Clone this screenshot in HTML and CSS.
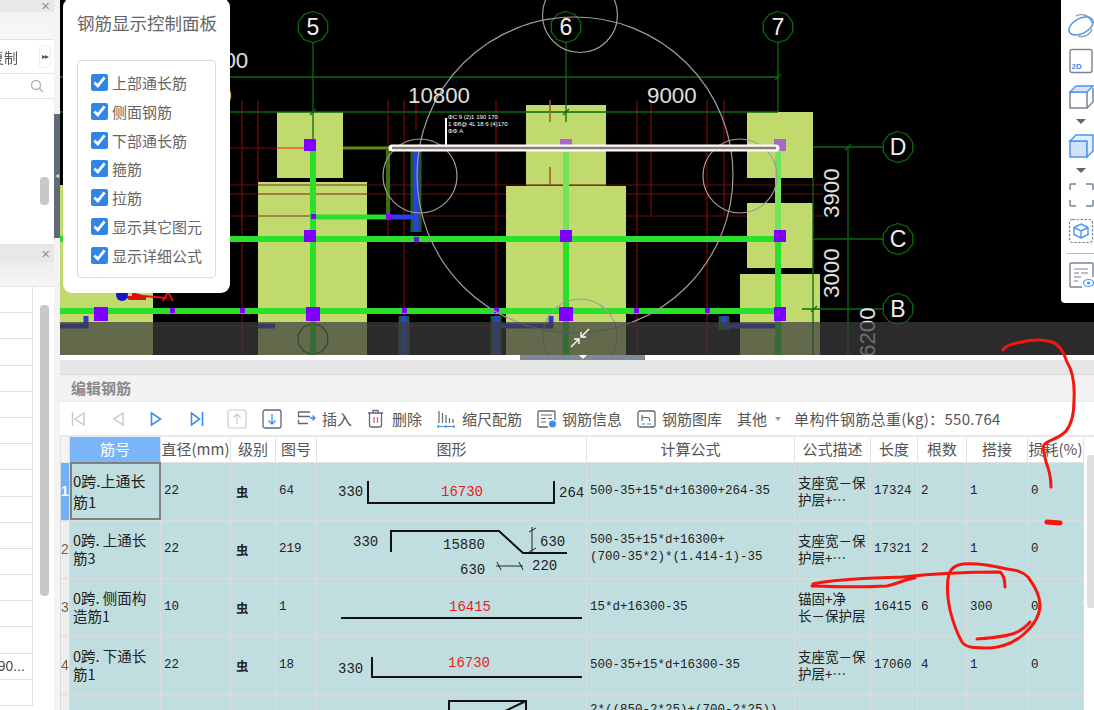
FILE: index.html
```html
<!DOCTYPE html>
<html lang="zh">
<head>
<meta charset="utf-8">
<title>编辑钢筋</title>
<link rel="stylesheet" href="styles.css">
</head>
<body>
<div class="app">
  <aside class="side">
    <section class="side-top">
      <div class="side-head"><span class="close">×</span></div>
      <div class="side-band"></div>
      <div class="side-actions"><span class="crop-text">复制</span><span class="more">▸▸</span></div>
      <div class="side-search">
        <svg class="ico-search" viewBox="0 0 14 14" width="14" height="14"><circle cx="6" cy="6" r="4.5"/><path d="M9.5 9.5L13 13"/></svg>
      </div>
      <div class="side-body"><span class="thumb thumb-a"></span></div>
    </section>
    <section class="side-low">
      <div class="side-head low"><span class="close">×</span></div>
      <div class="side-band low"></div>
      <div class="side-list">
        <span class="thumb thumb-b"></span>
        <div class="li"></div><div class="li"></div><div class="li"></div><div class="li"></div><div class="li"></div>
        <div class="li"></div><div class="li"></div><div class="li"></div><div class="li"></div><div class="li"></div>
        <div class="li"></div><div class="li"></div><div class="li"></div><div class="li"></div>
        <div class="li"><span>2790...</span></div>
        <div class="li"></div>
      </div>
    </section>
  </aside>
  <div class="sash"><div class="sash-gap"></div><div class="sash-grip">◂</div><div class="sash-rest"></div></div>
  <main class="main">
    <div class="view">
      <svg class="cad" viewBox="60 0 1034 355" width="1034" height="355">
        <defs>
          <polygon id="axis" points="0,-15.5 9,-12.5 14.7,-4.8 14.7,4.8 9,12.5 0,15.5 -9,12.5 -14.7,4.8 -14.7,-4.8 -9,-12.5"/>
        </defs>
        <rect x="60" y="0" width="1034" height="355" fill="#000"/>
        <g stroke="#7a0808" stroke-width="1.2" fill="none">
          <path d="M242 100V355M258 100V182M388 100V240M404 100V355M416 100V130M496 100V355M637 100V355M651 100V215M707 100V355M724 100V215"/>
          <path d="M230 148H390M230 185H823M230 194H823M230 216H823M60 326H823"/>
        </g>
        <g fill="#c1da6e">
          <rect x="60" y="185" width="93" height="170"/>
          <rect x="277" y="112" width="66" height="66"/>
          <rect x="258" y="182" width="109" height="173"/>
          <rect x="526" y="105" width="80" height="80"/>
          <rect x="506" y="186" width="120" height="169"/>
          <rect x="747" y="112" width="66" height="66"/>
          <rect x="747" y="203" width="66" height="65"/>
          <rect x="740" y="274" width="80" height="81"/>
        </g>
        <g stroke="#0c6a0c" stroke-width="1.3" fill="none">
          <path d="M60 77H778M60 112H778"/>
          <path d="M313 42V150M566 42V122M778 42V112"/>
          <path d="M813 147H883M813 239H883M802 309H883M848 147V355M813 178V355"/>
          <path d="M775 80L781 74M845 150L851 144M811 312L817 306M310 115L316 109M563 115L569 109"/>
          <use href="#axis" x="313" y="27"/><use href="#axis" x="566" y="27"/><use href="#axis" x="778" y="27"/>
          <use href="#axis" x="898" y="147"/><use href="#axis" x="898" y="239"/><use href="#axis" x="898" y="309"/>
          <use href="#axis" x="313" y="339"/>
        </g>
        <g fill="none">
          <path d="M258 194H367" stroke="#8c1a0a" stroke-width="1.2"/>
          <path d="M258 185H367M258 216H313" stroke="#a0673a" stroke-width="1.6"/>
          <path d="M550 100V122M550 167V185M566 167V185" stroke="#a0571e" stroke-width="1.5"/>
          <path d="M526 185H606" stroke="#8c4a1a" stroke-width="1.4"/>
          <path d="M343 148H390" stroke="#5f8a1a" stroke-width="3"/>
          <path d="M277 148H304" stroke="#e87a30" stroke-width="2"/>
        </g>
        <g stroke="#2a7a3a" fill="none" stroke-width="11" opacity=".75">
          <path d="M416 150V232M404 316V355M496 316V355M724 316V330"/>
        </g>
        <path d="M388 148V214" stroke="#3d6e10" stroke-width="4" fill="none"/>
        <g stroke="#2b3fe8" fill="none" stroke-width="5">
          <path d="M416 150V232M390 217H416M404 316V355M496 316V355M724 316V326"/>
          <path d="M60 326H86V316M500 326H551V316M258 326H275M724 326H778" stroke="#3535c8"/>
        </g>
        <g stroke="#2be02b" fill="none">
          <path d="M60 239H778M60 311H778" stroke-width="6"/>
          <path d="M313 150V355M566 236V355M778 236V355" stroke-width="6"/>
          <path d="M313 217H390" stroke-width="5"/>
          <path d="M566 152V236M778 152V236" stroke="#72e35a" stroke-width="6"/>
        </g>
        <g fill="#8000ff">
          <rect x="304" y="139" width="12" height="12"/>
          <rect x="304" y="230" width="12" height="12"/>
          <rect x="306" y="307" width="14" height="14"/>
          <rect x="94" y="307" width="14" height="14"/>
          <rect x="560" y="230" width="12" height="12"/>
          <rect x="559" y="307" width="14" height="14"/>
          <rect x="774" y="230" width="12" height="12"/>
          <rect x="774" y="307" width="12" height="14"/>
          <rect x="170" y="308" width="5" height="5"/><rect x="240" y="308" width="5" height="5"/>
          <rect x="402" y="308" width="5" height="5"/><rect x="494" y="308" width="5" height="5"/>
          <rect x="634" y="308" width="5" height="5"/><rect x="705" y="308" width="5" height="5"/>
          <rect x="311" y="214" width="5" height="5"/><rect x="386" y="214" width="5" height="5"/>
          <rect x="414" y="237" width="5" height="5"/><rect x="414" y="146" width="5" height="4"/>
        </g>
        <g fill="#a868c8">
          <rect x="560" y="139" width="12" height="11"/>
          <rect x="774" y="139" width="12" height="12"/>
        </g>
        <g stroke="#9c9c9c" stroke-width="1.2" fill="none">
          <circle cx="575" cy="175" r="158"/>
          <circle cx="580" cy="15" r="37.5"/>
          <circle cx="420" cy="176" r="37"/>
          <circle cx="740" cy="176" r="37"/>
          <circle cx="580" cy="336" r="37"/>
        </g>
        <path d="M392 148H776" stroke="#fff" stroke-width="7" stroke-linecap="round"/>
        <path d="M392 148H776" stroke="#8c7b72" stroke-width="2.5"/>
        <path d="M446 118V147" stroke="#fff" stroke-width="2"/>
        <g class="tiny"><text x="448" y="119">ΦC 9 (2)1 190 170</text><text x="448" y="126">1 Φ8@ 4L 18 6 (4)170</text><text x="448" y="133">ΦΦ A</text></g>
        <g class="dim">
          <text x="408" y="103">10800</text><text x="647" y="103">9000</text><text x="211" y="68">900</text><text x="182" y="103">6000</text>
          <text transform="translate(839 218) rotate(-90)">3900</text>
          <text transform="translate(839 298) rotate(-90)">3000</text>
          <text transform="translate(875 357) rotate(-90)">6200</text>
        </g>
        <g class="axis-label">
          <text x="313" y="35">5</text><text x="566" y="35">6</text><text x="778" y="35">7</text>
          <text x="898" y="155">D</text><text x="898" y="247">C</text><text x="898" y="317">B</text>
        </g>
        <path d="M125 296h7v-4l14 4v4H129z" fill="#e01010"/>
        <circle cx="122" cy="295" r="6" fill="#1414c8"/>
        <path d="M143 296L167 298M163 301L168 292L173 301" stroke="#e01010" stroke-width="2" fill="none"/>
        <rect x="60" y="322" width="1034" height="33" fill="#3c3c3c" fill-opacity=".71"/>
        <g stroke="#fff" stroke-width="1.4" fill="none">
          <path d="M589 329L581 337M581 332V337H586"/>
          <path d="M571 347L579 339M579 344V339H574"/>
        </g>
      </svg>

      <div class="panel">
        <h2 class="panel-title">钢筋显示控制面板</h2>
        <div class="panel-box">
          <label class="chk"><input type="checkbox" checked><span>上部通长筋</span></label>
          <label class="chk"><input type="checkbox" checked><span>侧面钢筋</span></label>
          <label class="chk"><input type="checkbox" checked><span>下部通长筋</span></label>
          <label class="chk"><input type="checkbox" checked><span>箍筋</span></label>
          <label class="chk"><input type="checkbox" checked><span>拉筋</span></label>
          <label class="chk"><input type="checkbox" checked><span>显示其它图元</span></label>
          <label class="chk"><input type="checkbox" checked><span>显示详细公式</span></label>
        </div>
      </div>

      <div class="vtools">
        <svg viewBox="0 0 26 26" width="26" height="26"><path d="M8 4A11 11 0 0 1 24 11M24 17A11 11 0 0 1 10 24" fill="none" stroke="#9aa3b0" stroke-width="1.5"/><ellipse cx="13" cy="14" rx="13" ry="7.500" transform="rotate(-28 13 14)" fill="none" stroke="#4c96ec" stroke-width="1.500"/></svg>
        <svg viewBox="0 0 26 26" width="26" height="26"><rect x="2" y="1.500" width="22" height="23" rx="2" fill="none" stroke="#7a8494" stroke-width="1.400"/><text x="3.500" y="21" class="t2d">2D</text></svg>
        <svg viewBox="0 0 26 26" width="26" height="26"><path d="M2 8H19V24H2Z" fill="none" stroke="#7a8494" stroke-width="1.500"/><path d="M25 4V18L19 24" fill="none" stroke="#7a8494" stroke-width="1.500"/><path d="M2 8L8 2H25L19 8Z" fill="#d6e6fa" stroke="#4c96ec" stroke-width="1.300"/></svg>
        <span class="caret"></span>
        <svg viewBox="0 0 26 26" width="26" height="26"><path d="M2 8H19V24H2Z" fill="#cfe2fa" stroke="#4c96ec" stroke-width="1.500"/><path d="M2 8L8 2H25V18L19 24V8Z" fill="#e2eefc" stroke="#4c96ec" stroke-width="1.500"/></svg>
        <span class="caret"></span>
        <svg viewBox="0 0 26 26" width="26" height="26"><path d="M2 8V3a1 1 0 0 1 1-1H8M18 2H24a1 1 0 0 1 1 1V8M25 18V23a1 1 0 0 1-1 1H18M8 24H3a1 1 0 0 1-1-1V18" fill="none" stroke="#7a8494" stroke-width="1.500"/></svg>
        <svg viewBox="0 0 26 26" width="26" height="26"><rect x="1.500" y="1.500" width="23" height="23" rx="3" fill="none" stroke="#7a8494" stroke-width="1.200" stroke-dasharray="2.500 1.500"/><path d="M13 6L20 9.500V16.500L13 20L6 16.500V9.500ZM6 9.500L13 13L20 9.500M13 13V20" fill="none" stroke="#4c96ec" stroke-width="1.400"/></svg>
        <span class="vsep"></span>
        <svg viewBox="0 0 26 26" width="26" height="26"><path d="M14 25H3a1 1 0 0 1-1-1V2a1 1 0 0 1 1-1H24a1 1 0 0 1 1 1V15" fill="none" stroke="#7a8494" stroke-width="1.400"/><path d="M6 7H20M6 11H11M13 11H20M6 15H13M6 19H10" stroke="#7a8494" stroke-width="1.200"/><ellipse cx="20.500" cy="21" rx="5" ry="3.500" fill="#fff" stroke="#4c96ec" stroke-width="1.200"/><circle cx="20.500" cy="21" r="1.600" fill="#4c96ec"/></svg>
      </div>
    </div>

    <div class="handlebar"><div class="handle"><span class="handle-tri"></span></div></div>

    <section class="editor">
      <div class="ed-strip"></div>
      <div class="ed-title">编辑钢筋</div>
      <div class="toolbar">
        <svg class="tb" viewBox="0 0 14 16" width="14" height="16"><path d="M1.500 1V15M13 2V14L4 8Z" fill="none" stroke="#c4c8ce" stroke-width="1.400"/></svg>
        <svg class="tb nav2" viewBox="0 0 12 16" width="12" height="16"><path d="M11 2V14L2 8Z" fill="none" stroke="#c4c8ce" stroke-width="1.400"/></svg>
        <svg class="tb nav3" viewBox="0 0 12 16" width="12" height="16"><path d="M1.500 2V14L10.500 8Z" fill="none" stroke="#3d8bef" stroke-width="1.600"/></svg>
        <svg class="tb nav4" viewBox="0 0 14 16" width="14" height="16"><path d="M12.500 1V15M1.500 2V14L9.500 8Z" fill="none" stroke="#3d8bef" stroke-width="1.600"/></svg>
        <svg class="tb nav5" viewBox="0 0 20 20" width="20" height="20"><rect x="1" y="1" width="18" height="18" rx="2" fill="none" stroke="#c8ccd2" stroke-width="1.200"/><path d="M10 15V5M6.500 8.500L10 5L13.500 8.500" fill="none" stroke="#c8ccd2" stroke-width="1.200"/></svg>
        <svg class="tb nav6" viewBox="0 0 20 20" width="20" height="20"><rect x="1" y="1" width="18" height="18" rx="2" fill="none" stroke="#5f6875" stroke-width="1.300"/><path d="M10 5V15M6.500 11.500L10 15L13.500 11.500" fill="none" stroke="#3d8bef" stroke-width="1.300"/></svg>
        <svg class="tb nav7" viewBox="0 0 19 16" width="19" height="16"><path d="M13 1H1.500V5.500H13M1.500 8.500V12.500H11" fill="none" stroke="#5f6875" stroke-width="1.300"/><path d="M13 7H18M15.500 4.500L18 7L15.500 9.500" fill="none" stroke="#3d8bef" stroke-width="1.300"/></svg>
        <span class="tb-label m6">插入</span>
        <svg class="tb nav8" viewBox="0 0 17 19" width="17" height="19"><path d="M1 4H16M6 4V1.500H11V4M2.500 4V16a2 2 0 0 0 2 2H12.500a2 2 0 0 0 2-2V4" fill="none" stroke="#5f6875" stroke-width="1.300"/><path d="M7 8V14M10.500 8V14" stroke="#e06050" stroke-width="1.300"/></svg>
        <span class="tb-label m8">删除</span>
        <svg class="tb nav8" viewBox="0 0 18 18" width="18" height="18"><path d="M2 1V13M5.500 3V13M9 5V13M12.500 8V13M16 9V13" stroke="#5f6875" stroke-width="1.200"/><path d="M1 16.500H17M1 15V18M17 15V18M9 15V18" stroke="#3d8bef" stroke-width="1.200"/></svg>
        <span class="tb-label m7">缩尺配筋</span>
        <svg class="tb nav8" viewBox="0 0 20 18" width="20" height="18"><path d="M11 17H2a1 1 0 0 1-1-1V2a1 1 0 0 1 1-1H17a1 1 0 0 1 1 1V10" fill="none" stroke="#5f6875" stroke-width="1.300"/><path d="M4 5H15M4 8.500H9M11 8.500H15M4 12H9" stroke="#5f6875" stroke-width="1.100"/><circle cx="15.500" cy="14" r="3.500" fill="#3d8bef"/></svg>
        <span class="tb-label m5">钢筋信息</span>
        <svg class="tb nav8" viewBox="0 0 19 18" width="19" height="18"><rect x="1" y="1" width="17" height="16" rx="2" fill="none" stroke="#5f6875" stroke-width="1.300"/><path d="M5 5V11M5 7.500H11a1.500 1.500 0 0 1 1.500 1.500V11" fill="none" stroke="#5f6875" stroke-width="1.200"/><path d="M5 14H8M10 14H14" stroke="#3d8bef" stroke-width="1.200"/></svg>
        <span class="tb-label m6">钢筋图库</span>
        <span class="tb-label other">其他</span><span class="tb-caret"></span>
        <span class="tb-total">单构件钢筋总重(kg)：550.764</span>
      </div>
      <div class="grid-wrap">
        <table class="grid">
          <colgroup><col class="c0"><col class="c1"><col class="c2"><col class="c3"><col class="c4"><col class="c5"><col class="c6"><col class="c7"><col class="c8"><col class="c9"><col class="c10"><col class="c11"></colgroup>
          <thead>
            <tr>
              <th class="corner"></th><th class="active-head">筋号</th><th>直径(mm)</th><th>级别</th><th>图号</th><th>图形</th><th>计算公式</th><th>公式描述</th><th>长度</th><th>根数</th><th>搭接</th><th>损耗(%)</th>
            </tr>
          </thead>
          <tbody>
            <tr>
              <td class="rh rh-on">1</td><td class="name cur">0跨.上通长筋1</td><td>22</td><td class="grade">虫</td><td>64</td>
              <td class="shape"><svg viewBox="0 0 270 57" width="270" height="57">
                <text x="21" y="33" class="s">330</text><path d="M51 18V40H237V18" class="bar"/><text x="145" y="33" class="r">16730</text><text x="242" y="34" class="s">264</text></svg></td>
              <td class="f">500-35+15*d+16300+264-35</td><td class="d">支座宽－保<br>护层+…</td><td>17324</td><td>2</td><td>1</td><td>0</td>
            </tr>
            <tr class="tall">
              <td class="rh">2</td><td class="name alt">0跨. 上通长筋3</td><td>22</td><td class="grade">虫</td><td>219</td>
              <td class="shape"><svg viewBox="0 0 270 57" width="270" height="57">
                <text x="36" y="25" class="s">330</text><path d="M74 31V10H182L206 32H250" class="bar"/><text x="126" y="28" class="s">15880</text>
                <text x="223" y="25" class="s">630</text><text x="143" y="53" class="s">630</text><text x="215" y="49" class="s">220</text>
                <path d="M215 6V32M212 11L219 7M212 31L219 27M179 45H206M180 41L184 49M202 41L206 49" class="thin"/></svg></td>
              <td class="f">500-35+15*d+16300+<br>(700-35*2)*(1.414-1)-35</td><td class="d">支座宽－保<br>护层+…</td><td>17321</td><td>2</td><td>1</td><td>0</td>
            </tr>
            <tr class="tall">
              <td class="rh">3</td><td class="name alt">0跨. 侧面构造筋1</td><td>10</td><td class="grade">虫</td><td>1</td>
              <td class="shape"><svg viewBox="0 0 270 57" width="270" height="57">
                <text x="153" y="32" class="r">16415</text><path d="M24 39H265" class="bar"/></svg></td>
              <td class="f">15*d+16300-35</td><td class="d">锚固+净<br>长－保护层</td><td>16415</td><td>6</td><td>300</td><td>0</td>
            </tr>
            <tr>
              <td class="rh">4</td><td class="name alt">0跨. 下通长筋1</td><td>22</td><td class="grade">虫</td><td>18</td>
              <td class="shape"><svg viewBox="0 0 270 57" width="270" height="57">
                <text x="21" y="36" class="s">330</text><path d="M55 20V40H265" class="bar"/><text x="152" y="30" class="r">16730</text></svg></td>
              <td class="f">500-35+15*d+16300-35</td><td class="d">支座宽－保<br>护层+…</td><td>17060</td><td>4</td><td>1</td><td>0</td>
            </tr>
            <tr>
              <td class="rh">5</td><td class="name"></td><td></td><td></td><td></td>
              <td class="shape"><svg viewBox="0 0 270 57" width="270" height="57">
                <path d="M132 18V6H209V18M184 18L209 6" class="bar"/></svg></td>
              <td class="f top">2*((850-2*25)+(700-2*25))</td><td></td><td></td><td></td><td></td><td></td>
            </tr>
          </tbody>
        </table>
        <span class="grid-scroll"></span>
      </div>
    </section>
  </main>
</div>
<svg class="ink" viewBox="0 0 1094 710" width="1094" height="710">
  <path d="M1003 350C1005 345 1015 343 1022 342C1032 339 1048 339 1056 344C1062 349 1064 354 1067 362C1072 370 1075 382 1074 400C1074 415 1071 425 1066 431C1060 438 1052 439 1046 443C1041 446 1044 452 1046 462C1050 472 1051 480 1051 487" />
  <path d="M1047 522L1060 523" class="blob"/>
  <path d="M813 584C840 578 880 578 903 577C930 574 960 572 1000 572C1004 575 1005 580 1005 587M812 586C840 587 870 587 887 586C900 583 905 579 915 578"/>
  <path d="M1007 569C990 565 975 563 963 564C955 565 951 568 949 574C946 585 948 600 950 610C953 622 958 635 962 642C966 648 975 648 990 648C1005 647 1015 642 1024 634C1034 625 1040 615 1040 605C1040 595 1034 585 1028 577C1022 571 1015 570 1007 569"/>
  <path d="M977 639C990 638 1005 637 1015 633C1022 630 1026 627 1030 622"/>
</svg>
</body>
</html>
```

FILE: styles.css
```css
*, *::before, *::after { box-sizing: border-box; }
html, body {
  margin: 0;
  padding: 0;
  width: 1094px;
  height: 710px;
  overflow: hidden;
  background: #fff;
  font-family: "Noto Sans CJK SC", "Noto Sans", sans-serif;
}
.app {
  display: grid;
  grid-template-columns: 54px 6px 1034px;
  width: 1094px;
  height: 710px;
  overflow: hidden;
  filter: blur(.35px);
}

/* left column */
.side { display: flex; flex-direction: column; height: 710px; overflow: hidden; }
.side-top { height: 238px; display: flex; flex-direction: column; overflow: hidden; }
.side-low { flex: 1; display: flex; flex-direction: column; margin-top: 6px; overflow: hidden; border-top: 1px solid #e2e2e2; }
.side-head { height: 12px; background: #e8e8e8; display: flex; justify-content: flex-end; align-items: flex-end; padding-right: 4px; flex: none; }
.side-head.low { height: 17px; align-items: center; }
.close { color: #8e8e8e; font: 15px/12px "Liberation Sans", sans-serif; }
.side-band { height: 28px; background: linear-gradient(#f2f2f2, #f8f8f8); border-bottom: 1px solid #e4e4e4; flex: none; }
.side-band.low { height: 25px; background: linear-gradient(#ececec, #f6f6f6); }
.side-actions { height: 34px; display: flex; justify-content: flex-end; align-items: center; gap: 21px; padding-right: 3px; border-bottom: 1px solid #e4e4e4; flex: none; }
.crop-text { color: #555; font-size: 14px; white-space: nowrap; flex: none; }
.more { width: 12px; height: 23px; border: 1px solid #eee; border-radius: 3px; font: 8px/21px "DejaVu Sans", sans-serif; letter-spacing: -1px; color: #555; flex: none; text-align: center; }
.side-search { height: 25px; border-bottom: 1px solid #e4e4e4; display: flex; justify-content: flex-end; align-items: center; padding-right: 10px; flex: none; }
.ico-search { fill: none; stroke: #b4b4b4; stroke-width: 1.4; }
.side-body { flex: 1; position: relative; }
.thumb { position: absolute; left: 40px; width: 9px; border-radius: 4px; background: #c8c8c8; }
.thumb-a { top: 78px; height: 28px; }
.thumb-b { top: 18px; height: 291px; }
.side-list { flex: 1; position: relative; }
.li { width: 33px; height: 26.200px; border-bottom: 1px solid #e0e0e0; border-right: 1px solid #e0e0e0; display: flex; justify-content: flex-end; align-items: center; padding-right: 7px; font-size: 14px; color: #444; }
.li span { flex: none; font-family: "Liberation Sans", sans-serif; }

.sash { display: flex; flex-direction: column; height: 710px; background: #f3f3f3; }
.sash-gap { height: 114px; }
.sash-grip { height: 124px; background: #606a78; color: #d8dce2; font: 8px/124px "DejaVu Sans", sans-serif; text-align: center; }
.sash-rest { flex: 1; }

/* main */
.main { display: flex; flex-direction: column; height: 710px; overflow: hidden; }
.view { position: relative; height: 355px; flex: none; overflow: hidden; }
.cad { display: block; }
.tiny text { fill: #fff; font: 6px "Liberation Sans", sans-serif; }
.dim text { fill: #e0e0e0; font: 22.3px "Liberation Sans", sans-serif; }
.axis-label text { fill: #eee; font: 23px "Liberation Sans", sans-serif; text-anchor: middle; }

.panel {
  position: absolute;
  left: 3px;
  top: -2px;
  width: 167px;
  height: 295px;
  padding: 14px 14px 15px;
  background: #fff;
  border-radius: 9px;
  display: flex;
  flex-direction: column;
}
.panel-title { margin: 0; height: 48px; font-size: 17.500px; font-weight: 400; line-height: 22px; color: #666; white-space: nowrap; }
.panel-box { flex: 1; border: 1px solid #dcdcdc; border-radius: 4px; padding: 13px 13px 0; display: flex; flex-direction: column; gap: 11.800px; }
.chk { display: flex; align-items: center; gap: 4px; height: 17px; font-size: 15px; color: #666; white-space: nowrap; }
.chk input { width: 17px; height: 17px; margin: 0; accent-color: #2f86e6; flex: none; }

.vtools {
  position: absolute;
  right: 0;
  top: 0;
  width: 33px;
  height: 303px;
  padding: 12px 0 0 7px;
  background: #fff;
  border-bottom-left-radius: 4px;
  display: flex;
  flex-direction: column;
  gap: 10px;
  overflow: hidden;
}
.vtools svg { display: block; flex: none; }
.t2d { fill: #3d8bef; font: bold 8px "Liberation Sans", sans-serif; }
.caret { width: 10px; height: 5px; margin: -1px 0 -1px 8px; border: 5px solid transparent; border-top: 5px solid #666; border-bottom: 0; flex: none; }
.vsep { height: 1px; margin: -1px 0 -2px -1px; background: #bbb; flex: none; }

.handlebar { height: 5px; flex: none; background: #fff; display: flex; padding-left: 460px; }
.handle { width: 125px; height: 5px; background: #7d8998; display: flex; justify-content: center; }
.handle-tri { width: 8px; height: 4px; border: 4px solid transparent; border-top: 4px solid #fff; border-bottom: 0; }

.editor { flex: 1; display: flex; flex-direction: column; overflow: hidden; }
.ed-strip { height: 15px; background: #e6e6e6; border-bottom: 1px solid #d8d8d8; flex: none; }
.ed-title { height: 27px; line-height: 26px; padding-left: 11px; font-size: 15px; font-weight: 700; color: #8a8a8a; background: #f2f2f2; border-bottom: 1px solid #e8e8e8; flex: none; }
.toolbar { height: 35px; flex: none; display: flex; align-items: center; background: #fff; font-size: 15px; color: #555; border-bottom: 2px solid #e8e8e8; padding-left: 11px; white-space: nowrap; }
.tb { flex: none; display: block; }
.nav2 { margin-left: 27px; }
.nav3 { margin-left: 26px; }
.nav4 { margin-left: 28px; }
.nav5 { margin-left: 23px; }
.nav6 { margin-left: 15px; }
.nav7 { margin-left: 15px; }
.nav8 { margin-left: 15px; }
.tb-label { flex: none; }
.m5 { margin-left: 5px; }
.m6 { margin-left: 6px; }
.m7 { margin-left: 7px; }
.m8 { margin-left: 8px; }
.other { margin-left: 15px; }
.tb-caret { width: 6px; height: 4px; margin-left: 8px; border: 3px solid transparent; border-top: 4px solid #999; border-bottom: 0; flex: none; }
.tb-total { margin-left: 13px; flex: none; letter-spacing: .3px; }

.grid-wrap { flex: 1; position: relative; overflow: hidden; }
.grid { width: 1023px; table-layout: fixed; border-collapse: collapse; background: #c0dee0; }
.c0 { width: 9px; } .c1 { width: 91px; } .c2 { width: 70px; } .c3 { width: 45px; } .c4 { width: 41px; }
.c5 { width: 270px; } .c6 { width: 208px; } .c7 { width: 76px; } .c8 { width: 47px; } .c9 { width: 49px; } .c10 { width: 61px; } .c11 { width: 56px; }
.grid th { height: 25px; padding: 0; background: #fff; font-size: 15px; line-height: 22px; font-weight: 400; color: #555; border: 1px solid #e2e2e2; border-top: 0; white-space: nowrap; overflow: hidden; }
.grid th.active-head { background: #7ab5f9; color: #fff; }
.grid th.corner { background: #f4f4f4; }
.grid td { height: 57px; padding: 0 3px; border: 1px solid #dcdcdc; font: 12.500px/17px "Liberation Mono", "Noto Sans CJK SC", monospace; color: #222; overflow: hidden; }
.grid tr.tall td { height: 58px; }
.grid td.rh { padding: 0; text-align: center; background: #eeeeee; color: #77604a; font: 14px "Liberation Sans", sans-serif; }
.grid td.rh-on { background: #6fb2f8; color: #fff; font-weight: 700; }
.grid td.name { font: 15px/21px "Noto Sans CJK SC", sans-serif; padding-right: 10px; color: #222; }
.grid td.alt { font-size: 14.500px; line-height: 18px; }
.grid td.cur { outline: 2px solid #808080; outline-offset: -2px; }
.grid td.grade { font: 700 12.500px "Noto Sans CJK SC", sans-serif; padding-left: 5px; }
.grid td.shape { padding: 0; line-height: 0; }
.grid td.d { font: 13.500px/17px "Noto Sans CJK SC", sans-serif; padding: 0 0 0 3px; white-space: nowrap; }
.grid td.f { white-space: nowrap; }
.grid td.top { vertical-align: top; padding-top: 7px; }
.shape svg { display: block; }
.s { fill: #222; font: 14px "Liberation Mono", monospace; }
.r { fill: #e81c1c; font: 14px "Liberation Mono", monospace; text-anchor: middle; }
.bar { fill: none; stroke: #111; stroke-width: 2; }
.thin { fill: none; stroke: #222; stroke-width: 1; }
.grid-scroll { position: absolute; right: 0; top: 18px; width: 7px; height: 153px; background: #dedede; border-radius: 3px 0 0 3px; }

.ink { position: absolute; left: 0; top: 0; pointer-events: none; fill: none; stroke: #f5170f; stroke-width: 3; stroke-linecap: round; stroke-linejoin: round; }
.ink .blob { stroke-width: 5; }
```
